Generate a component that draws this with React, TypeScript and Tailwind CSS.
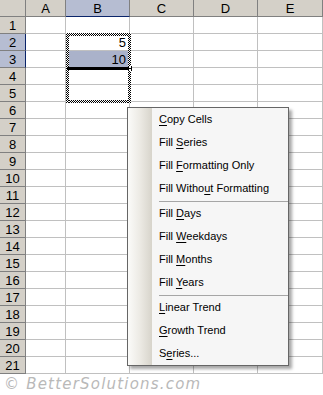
const cols = [
  { name: 'A', w: 'w-[40px]' },
  { name: 'B', w: 'w-[64px]' },
  { name: 'C', w: 'w-[64px]' },
  { name: 'D', w: 'w-[64px]' },
  { name: 'E', w: 'w-[65px]' },
];

const rows = Array.from({ length: 21 }, (_, i) => i + 1);

const values: Record<string, string> = { B2: '5', B3: '10' };

type MenuEntry = { label: string; key: number } | 'sep';

// key = index of the underlined letter
const menu: MenuEntry[] = [
  { label: 'Copy Cells', key: 0 },
  { label: 'Fill Series', key: 5 },
  { label: 'Fill Formatting Only', key: 5 },
  { label: 'Fill Without Formatting', key: 10 },
  'sep',
  { label: 'Fill Days', key: 5 },
  { label: 'Fill Weekdays', key: 5 },
  { label: 'Fill Months', key: 5 },
  { label: 'Fill Years', key: 5 },
  'sep',
  { label: 'Linear Trend', key: 0 },
  { label: 'Growth Trend', key: 0 },
  { label: 'Series...', key: 1 },
];

const checker =
  '[background-image:repeating-conic-gradient(#000_0%_25%,#fff_0%_50%)] [background-size:2px_2px]';

function HeaderRow() {
  return (
    <div className="flex h-[17px]">
      <div className="w-[26px] border-r border-b border-[#808080] bg-[#d4d0c8]" />
      {cols.map((c) => (
        <div
          key={c.name}
          className={`${c.w} flex items-center justify-center border-r border-b text-[13px] leading-none ${
            c.name === 'B'
              ? 'bg-[#b6bdd2] border-r-[#808080] border-b-[#0a246a]'
              : 'bg-[#d4d0c8] border-[#808080]'
          }`}
        >
          {c.name}
        </div>
      ))}
    </div>
  );
}

function GridRow({ n }: { n: number }) {
  const selected = n === 2 || n === 3;
  return (
    <div className="flex h-[17px]">
      <div
        className={`w-[26px] flex items-center justify-center border-r border-b text-[13px] leading-none ${
          selected ? 'bg-[#b6bdd2] border-r-[#0a246a] border-b-[#808080]' : 'bg-[#d4d0c8] border-[#808080]'
        } ${n === 3 ? 'border-b-[#0a246a]' : ''}`}
      >
        {n}
      </div>
      {cols.map((c) => {
        const id = c.name + n;
        return (
          <div
            key={id}
            className={`${c.w} flex items-center justify-end pr-[3px] border-r border-b border-[#c0c0c0] text-[13px] leading-none ${
              id === 'B3' ? 'bg-[#aab2ca]' : 'bg-white'
            }`}
          >
            {values[id]}
          </div>
        );
      })}
    </div>
  );
}

function Label({ label, k }: { label: string; k: number }) {
  return (
    <span className="whitespace-pre">
      {label.slice(0, k)}
      <span className="underline underline-offset-2">{label[k]}</span>
      {label.slice(k + 1)}
    </span>
  );
}

function FillMenu() {
  return (
    <div className="absolute left-[127px] top-[107px] w-[162px] flex border border-[#666] bg-[#f6f6f6] shadow-[3px_3px_3px_rgba(0,0,0,0.35)] font-['Liberation_Sans',sans-serif] text-[11px] text-black">
      <div className="w-[24px] shrink-0 bg-gradient-to-r from-[#fbfbf9] via-[#eceae4] to-[#d7d4cb]" />
      <div className="flex-1 pl-[7px]">
        {menu.map((m, i) =>
          m === 'sep' ? (
            <div key={i} className="h-[2px] flex items-center">
              <div className="h-px w-full bg-[#a6a6a6]" />
            </div>
          ) : (
            <div key={i} className="h-[23px] flex items-center">
              <Label label={m.label} k={m.key} />
            </div>
          )
        )}
      </div>
    </div>
  );
}

export default function App() {
  return (
    <div className="w-[323px] h-[395px] bg-white overflow-hidden font-['Liberation_Sans',Arial,sans-serif] text-black">
      <div className="relative">
        <HeaderRow />
        {rows.map((n) => (
          <GridRow key={n} n={n} />
        ))}

        {/* marching ants round B2:B5 */}
        <div className={`absolute left-[66px] top-[33px] w-[65px] h-[3px] ${checker}`} />
        <div className={`absolute left-[66px] top-[100px] w-[65px] h-[3px] ${checker}`} />
        <div className={`absolute left-[66px] top-[33px] w-[3px] h-[70px] ${checker}`} />
        <div className={`absolute left-[128px] top-[33px] w-[3px] h-[70px] ${checker}`} />

        {/* drag line + fill handle */}
        <div className="absolute left-[67px] top-[67px] w-[61px] h-[3px] bg-black" />
        <div className="absolute left-[128px] top-[66px] w-[4px] h-[5px] border-x border-black bg-white" />
        <div className="absolute left-[128px] top-[68px] w-[4px] h-px bg-black" />

        <FillMenu />
      </div>
      <div className="h-[21px] pl-[4px] flex items-center font-['DejaVu_Sans',sans-serif] italic text-[15px] tracking-[1.2px] text-[#b9b9b9]">
        © BetterSolutions.com
      </div>
    </div>
  );
}
